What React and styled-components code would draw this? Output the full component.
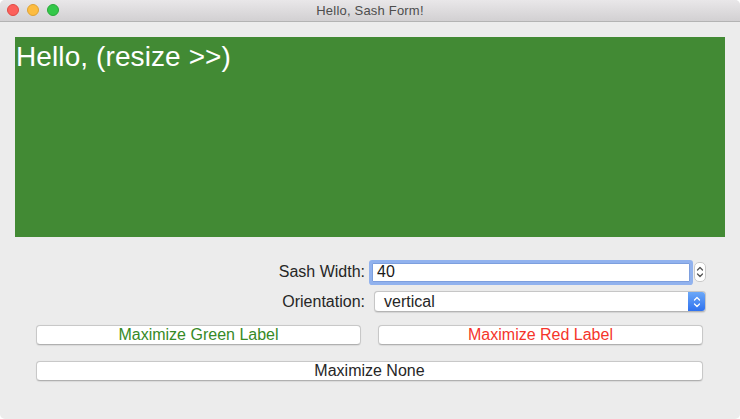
import React from "react";
import styled, { createGlobalStyle } from "styled-components";

const Global = createGlobalStyle`
  html, body { margin: 0; padding: 0; background: #ffffff; }
  body { font-family: "Liberation Sans", Arial, sans-serif; }
  * { box-sizing: border-box; }
`;

const Window = styled.div`
  width: 740px;
  height: 419px;
  background: #ececec;
  border-radius: 5px;
  overflow: hidden;
  display: flex;
  flex-direction: column;
`;

const TitleBar = styled.div`
  height: 22px;
  flex: none;
  position: relative;
  display: flex;
  align-items: center;
  justify-content: center;
  background: linear-gradient(#e9e7e9, #d2d0d2);
  border-bottom: 1px solid #b3b3b3;
  color: #4d4d4d;
  font-size: 13px;
  letter-spacing: 0.2px;
`;

const Lights = styled.div`
  position: absolute;
  left: 7px;
  top: 4px;
  display: flex;
  gap: 8px;
`;

const Light = styled.span`
  width: 12px;
  height: 12px;
  border-radius: 50%;
  background: ${(p) => p.$c};
  border: 0.5px solid ${(p) => p.$b};
`;

const Body = styled.div`
  flex: 1;
  padding: 15px 15px 0;
  display: flex;
  flex-direction: column;
`;

const GreenPanel = styled.div`
  height: 200px;
  background: #428a34;
  color: #ffffff;
  font-size: 28px;
  line-height: 32px;
  padding: 4px 1px;
  letter-spacing: 0.1px;
`;

const Form = styled.div`
  margin-top: 23px;
  display: flex;
  flex-direction: column;
  font-size: 16px;
  color: #262626;
`;

const FieldRow = styled.div`
  display: flex;
  align-items: center;
  height: ${(p) => p.$h}px;
  margin-top: ${(p) => p.$mt || 0}px;
  margin-left: -15px;
`;

const Label = styled.div`
  width: 365px;
  text-align: right;
  flex: none;
`;

const FocusField = styled.input`
  margin-left: 7px;
  width: 318px;
  height: 19px;
  border: 1px solid #7d9fde;
  outline: none;
  box-shadow: 0 0 0 3px #91b2ee;
  border-radius: 1px;
  background: #fff;
  font-family: "Liberation Sans", Arial, sans-serif;
  font-size: 16px;
  color: #1a1a1a;
  padding: 0 0 0 4px;
`;

const Stepper = styled.div`
  margin-left: 4px;
  width: 12px;
  height: 20px;
  border: 1px solid #c9c9c9;
  border-radius: 5px;
  background: #fff;
  display: flex;
  align-items: center;
  justify-content: center;
`;

const Select = styled.div`
  margin-left: 9px;
  width: 332px;
  height: 21px;
  background: #fff;
  border: 1px solid #c6c6c6;
  border-bottom-color: #b4b4b4;
  border-radius: 4px;
  display: flex;
  align-items: center;
  overflow: hidden;
  box-shadow: 0 0.5px 1px rgba(0, 0, 0, 0.1);
`;

const SelectText = styled.span`
  flex: 1;
  padding-left: 9px;
`;

const SelectArrow = styled.div`
  width: 17px;
  height: 100%;
  background: linear-gradient(#6ca8f8, #2f72ef);
  display: flex;
  align-items: center;
  justify-content: center;
`;

const ButtonGrid = styled.div`
  margin: ${(p) => p.$mt}px 22px 0 21px;
  display: grid;
  grid-template-columns: ${(p) => (p.$cols === 2 ? "1fr 1fr" : "1fr")};
  column-gap: 17px;
`;

const Button = styled.div`
  height: 20px;
  background: #fff;
  border: 1px solid #c8c8c8;
  border-bottom-color: #b0b0b0;
  border-radius: 4px;
  box-shadow: 0 0.5px 1px rgba(0, 0, 0, 0.08);
  display: flex;
  align-items: center;
  justify-content: center;
  color: ${(p) => p.$color || "#262626"};
`;

const Chevrons = ({ color, w = 8, h = 14 }) => (
  <svg width={w} height={h} viewBox="0 0 8 14">
    <path d="M1.5 5 L4 2.5 L6.5 5" fill="none" stroke={color} strokeWidth="1.3" strokeLinecap="round" strokeLinejoin="round" />
    <path d="M1.5 9 L4 11.5 L6.5 9" fill="none" stroke={color} strokeWidth="1.3" strokeLinecap="round" strokeLinejoin="round" />
  </svg>
);

export default function App() {
  return (
    <>
      <Global />
      <Window>
        <TitleBar>
          <Lights>
            <Light $c="#fc605b" $b="#de4a43" />
            <Light $c="#fdbc40" $b="#dea234" />
            <Light $c="#34c84a" $b="#2aa83a" />
          </Lights>
          Hello, Sash Form!
        </TitleBar>
        <Body>
          <GreenPanel>Hello, (resize &gt;&gt;)</GreenPanel>
          <Form>
            <FieldRow $h={24}>
              <Label>Sash Width:</Label>
              <FocusField readOnly value="40" />
              <Stepper>
                <Chevrons color="#555" w={8} h={14} />
              </Stepper>
            </FieldRow>
            <FieldRow $h={21} $mt={7}>
              <Label>Orientation:</Label>
              <Select>
                <SelectText>vertical</SelectText>
                <SelectArrow>
                  <Chevrons color="#fff" />
                </SelectArrow>
              </Select>
            </FieldRow>
            <ButtonGrid $cols={2} $mt={13}>
              <Button $color="#368a26">Maximize Green Label</Button>
              <Button $color="#f5352b">Maximize Red Label</Button>
            </ButtonGrid>
            <ButtonGrid $cols={1} $mt={16}>
              <Button>Maximize None</Button>
            </ButtonGrid>
          </Form>
        </Body>
      </Window>
    </>
  );
}
